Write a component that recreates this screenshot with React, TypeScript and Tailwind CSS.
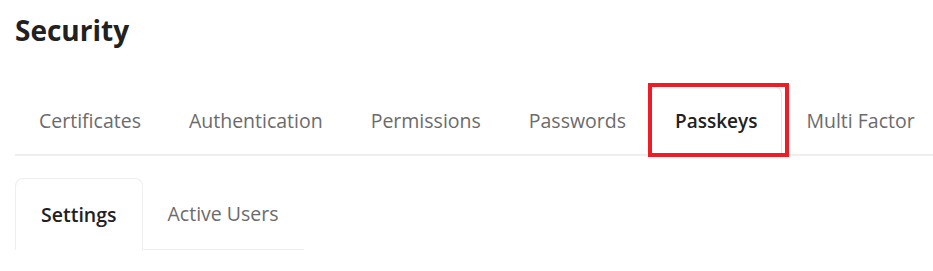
const mainTabs = ["Certificates", "Authentication", "Permissions", "Passwords", "Passkeys", "Multi Factor"];
const subTabs = ["Settings", "Active Users"];

export default function App() {
  const active = "Passkeys";
  const activeSub = "Settings";

  return (
    <div className="min-h-screen overflow-hidden bg-white pl-[15px] pt-[11px] font-['Open_Sans',sans-serif] text-[#212121]">
      <h1 className="text-[28px] font-bold leading-[38px]">Security</h1>

      <div className="mt-[37px] flex border-b-2 border-[#eeeeee]">
        {mainTabs.map((t) => {
          const on = t === active;
          return (
            <div key={t} className="relative shrink-0">
              <button
                className={`-mb-[2px] flex h-[70px] items-center whitespace-nowrap px-[24px] ${
                  on
                    ? "rounded-t-lg border-x border-t border-[#e5e5e5] bg-white text-[19px] font-semibold text-[#212121]"
                    : "text-[19.5px] text-[#6b6b6b]"
                }`}
              >
                {t}
              </button>
              {on && (
                <div className="pointer-events-none absolute -top-[3px] -left-[2px] -right-[7px] -bottom-[3px] border-4 border-[#ee1c25]" />
              )}
            </div>
          );
        })}
      </div>

      <div className="mt-[22px] inline-flex border-b border-[#eeeeee]">
        {subTabs.map((t) => {
          const on = t === activeSub;
          return (
            <button
              key={t}
              className={`-mb-px flex h-[72px] items-center whitespace-nowrap px-[25px] text-[19.5px] ${
                on
                  ? "rounded-t-lg border-x border-t border-[#eeeeee] bg-white font-semibold text-[#212121]"
                  : "text-[#6b6b6b]"
              }`}
            >
              {t}
            </button>
          );
        })}
      </div>
    </div>
  );
}
